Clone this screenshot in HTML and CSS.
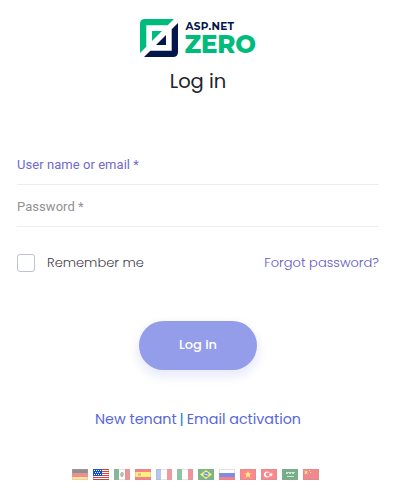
FILE: index.html
```html
<!DOCTYPE html>
<html lang="en">
<head>
<meta charset="utf-8">
<title>Log in</title>
<link rel="stylesheet" href="styles.css">
</head>
<body>
<main class="login">
  <header class="brand">
    <svg class="mark" viewBox="0 0 38 38">
      <path fill="#00bc7c" d="M5 0H34L27.700 6.300H6.300V27.700L0 34V5Q0 0 5 0Z"/>
      <path fill="#03164b" d="M38 4V33Q38 38 33 38H4L10.300 31.700H31.700V10.300Z"/>
      <path fill="#00bc7c" d="M12 12H22L12 22Z"/>
      <path fill="#03164b" d="M26 16V26H16Z"/>
    </svg>
    <div class="brand-name"><span class="asp">ASP.NET</span><span class="zero">ZERO</span></div>
  </header>
  <h1 class="title">Log in</h1>
  <form class="form">
    <label class="field active">User name or email *</label>
    <label class="field">Password *</label>
    <div class="options">
      <label class="remember"><span class="box"></span>Remember me</label>
      <a class="forgot">Forgot password?</a>
    </div>
    <button class="submit" type="button">Log in</button>
  </form>
  <nav class="links"><a>New tenant</a><span class="sep">|</span><a>Email activation</a></nav>
  <div class="flags">
    <svg class="flag" viewBox="0 0 16 11"><path fill="#222" d="M0 0h16v4H0z"/><path fill="#d22" d="M0 4h16v4H0z"/><path fill="#fc3" d="M0 8h16v3H0z"/></svg>
    <svg class="flag current" viewBox="0 0 16 11"><path fill="#fff" d="M0 0h16v11H0z"/><path stroke="#e0453c" d="M0 .5h16M0 2.500h16M0 4.500h16M0 6.500h16M0 8.500h16M0 10.500h16"/><path fill="#0b50c8" d="M0 0h9v7H0z"/><path stroke="#fff" stroke-dasharray="1 1" d="M1 1.500h7M2 3.500h6M1 5.500h7"/></svg>
    <svg class="flag" viewBox="0 0 16 11"><path fill="#fff" d="M0 0h16v11H0z"/><path fill="#08733a" d="M0 0h5v11H0z"/><path fill="#d62a35" d="M11 0h5v11h-5z"/><path fill="#8a7550" d="M7 3h2l1 2-1 3H7L6 6z"/></svg>
    <svg class="flag vivid" viewBox="0 0 16 11"><path fill="#f03040" d="M0 0h16v11H0z"/><path fill="#ffe81c" d="M0 3h16v5H0z"/><path fill="#d69350" d="M3 4h3v3H3z"/></svg>
    <svg class="flag" viewBox="0 0 16 11"><path fill="#fff" d="M0 0h16v11H0z"/><path fill="#6b90dd" d="M0 0h5v11H0z"/><path fill="#ee3341" d="M11 0h5v11h-5z"/></svg>
    <svg class="flag" viewBox="0 0 16 11"><path fill="#fff" d="M0 0h16v11H0z"/><path fill="#119348" d="M0 0h5v11H0z"/><path fill="#e52937" d="M11 0h5v11h-5z"/></svg>
    <svg class="flag vivid" viewBox="0 0 16 11"><path fill="#178a36" d="M0 0h16v11H0z"/><path fill="#ffdf20" d="M8 1l6 4.500L8 10 2 5.500z"/><circle cx="8" cy="5.500" r="2.500" fill="#1655ac"/><path stroke="#fff" stroke-width=".7" d="M6 5l4 1"/></svg>
    <svg class="flag vivid" viewBox="0 0 16 11"><path fill="#fff" d="M0 0h16v4H0z"/><path fill="#2841df" d="M0 4h16v4H0z"/><path fill="#f52c36" d="M0 8h16v3H0z"/></svg>
    <svg class="flag vivid" viewBox="0 0 16 11"><path fill="#fb3b41" d="M0 0h16v11H0z"/><path fill="#ffe928" d="M8 2l1 2.500h2.500L9.500 6l.8 2.800L8 7.200 5.700 8.800 6.500 6l-2-1.500H7z"/></svg>
    <svg class="flag vivid" viewBox="0 0 16 11"><path fill="#fb3940" d="M0 0h16v11H0z"/><circle cx="6" cy="5.500" r="3" fill="#fff"/><circle cx="6.800" cy="5.500" r="2" fill="#fb3940"/><path fill="#fff" d="M10 3.500l.7 1.300 1.300.2-1 1 .2 1.500-1.200-.8-1.500.8.400-1.500-1.200-.8 1.600-.2z"/></svg>
    <svg class="flag vivid" viewBox="0 0 16 11"><path fill="#197d38" d="M0 0h16v11H0z"/><path fill="none" stroke="#fff" stroke-opacity=".65" d="M4 3.500h9M4 4.500h2m1 0h2m1 0h2M5 7.500h7"/></svg>
    <svg class="flag vivid" viewBox="0 0 16 11"><path fill="#e93a42" d="M0 0h16v11H0z"/><path fill="#ffda35" d="M3 1l.7 1.500H5L4 3.500l.5 2L3 4.500l-1.500 1 .5-2-1-1h1.400zM6 1h1v1H6zM7 3h1v1H7z"/></svg>
  </div>
</main>
</body>
</html>
```
FILE: styles.css
```css
* { box-sizing: border-box; }
body {
  margin: 0;
  background: #fff;
  font-family: Poppins, Lato, sans-serif;
}
.login {
  width: 403px;
  height: 498px;
  padding: 19px 24px 0 17px;
  display: flex;
  flex-direction: column;
}
.brand { display: flex; height: 38px; justify-content: center; gap: 7px; }
.mark { width: 38px; height: 38px; }
.brand-name {
  width: 72px;
  display: flex;
  flex-direction: column;
  font-family: Montserrat, Poppins, "Open Sans", sans-serif;
  font-weight: 800;
  white-space: nowrap;
}
.asp { font-size: 10.5px; line-height: 12px; color: #03164b; margin: 2px 0 0 1px; letter-spacing: .25px; font-weight: 700; }
.zero { font-size: 24.5px; line-height: 22px; color: #00bc7c; letter-spacing: -.2px; }
.title {
  margin: 9px 0 0;
  height: 32px;
  line-height: 32px;
  font-size: 19.5px;
  font-weight: 400;
  color: #212529;
  text-align: center;
}
.form { margin-top: 46px; }
.field {
  display: block;
  height: 42px;
  padding-top: 3px;
  line-height: 38px;
  border-bottom: 1px solid #ebedf2;
  font-family: Roboto, sans-serif;
  font-size: 13px;
  letter-spacing: .05px;
  color: #8f9195;
}
.field.active { height: 41px; padding-top: 2px; color: #716aca; }
.options {
  display: flex;
  justify-content: space-between;
  align-items: center;
  height: 20px;
  margin-top: 26px;
  font-size: 13px;
  font-weight: 300;
  color: #3f4047;
}
.remember { display: flex; align-items: center; gap: 12px; }
.box { width: 18px; height: 18px; border: 1px solid #bdc3d4; border-radius: 3px; }
.forgot { color: #5f58c4; }
.submit {
  display: block;
  width: 118px;
  height: 49px;
  margin: 48px auto 0 122px;
  padding: 0 0 2px;
  border: 0;
  border-radius: 25px;
  background: #949de9;
  box-shadow: 0 5px 10px 2px rgba(88, 103, 221, .13);
  color: #fff;
  font-family: Poppins, Lato, sans-serif;
  font-size: 13px;
  font-weight: 500;
  line-height: 47px;
}
.links {
  display: flex;
  justify-content: center;
  gap: 4px;
  margin-top: 39px;
  height: 20px;
  line-height: 20px;
  font-size: 14.3px;
  font-weight: 400;
  color: #5867dd;
}
.sep { color: #2482c4; width: 2px; display: flex; justify-content: center; }
.flags { display: flex; gap: 5px; margin: 40px 0 0 55px; }
.flag { width: 16px; height: 11px; opacity: .5; outline: 1px solid rgba(120, 80, 80, .3); outline-offset: -1px; }
.flag.vivid { opacity: .6; }
.flag.current { opacity: 1; }
```
